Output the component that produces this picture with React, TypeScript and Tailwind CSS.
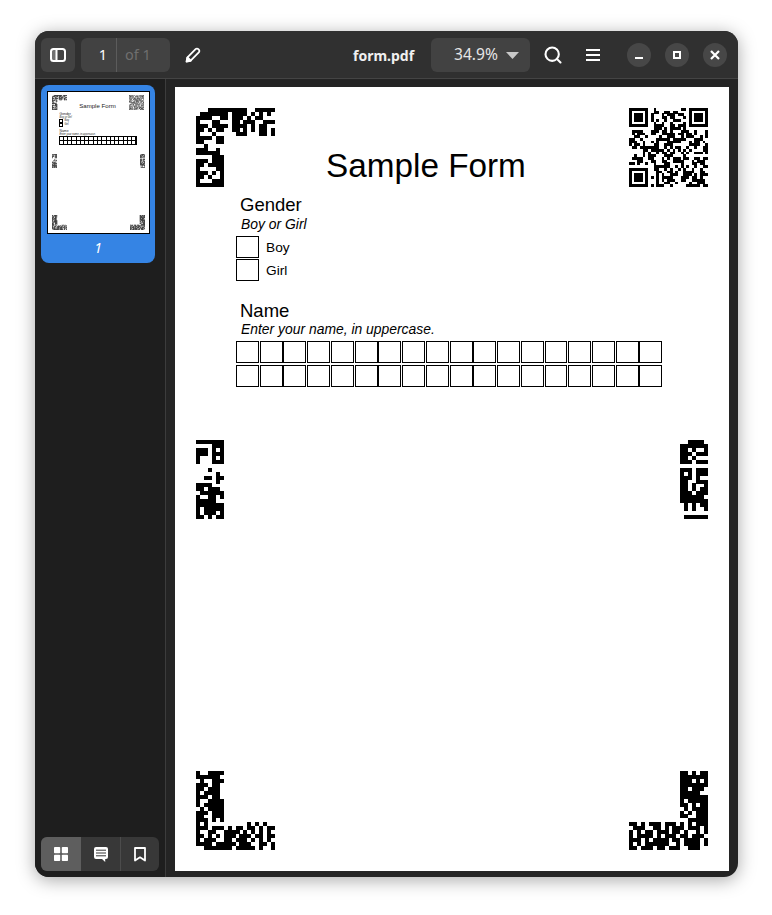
import { Search } from "lucide-react";

// module patterns for the marker blocks on the form
const topLeft = [
  "...##########..#####",
  ".#######.####.#.#.#.",
  "####..##.###.#.##...",
  "#...##...##.###..###",
  "###.####.####.#.##..",
  "##.#.##..##.#.#.##.#",
  "#...#.....###...##.#",
  "####.##",
  "##...##",
  "..#....",
  "###..#.",
  "######.",
  "....###",
  "###.###",
  "##.####",
  "#....##",
  "###.#.#",
  "##.#..#",
  "#...###",
  "#######",
];
const midLeft = [
  "#######",
  "....###",
  "###.#.#",
  "###.###",
  "#...#.#",
  "#...###",
  ".......",
  "...#...",
  ".....#.",
  "..##.##",
  ".....#.",
  "####...",
  "##.###.",
  ".######",
  "#..##.#",
  "#####..",
  "#######",
  "#.#####",
  "#.###.#",
  "##.#.##",
];
const midRight = [
  "..####.",
  "#######",
  "##.#..#",
  "###.###",
  "##.#...",
  "###.###",
  ".......",
  "###.###",
  "#.#.###",
  "###.#..",
  "##..###",
  "##.#..#",
  "##.#.##",
  "###.###",
  "######.",
  "#######",
  ".#.#.##",
  ".#.#..#",
  ".......",
  ".######",
];
const bottomLeft = [
  "#..####",
  "######.",
  ".#..###",
  "###.##.",
  "##.###.",
  "#.####.",
  "###.##.",
  "#..####",
  "#.#####",
  ".#.####",
  "###.###",
  "##..###",
  "###.#.#",
  "#.#..........#.#.#..",
  "###.###.#.##.##.#.##",
  "#..##..####.#.#.#.#.",
  "##.#.#.###.###.##.##",
  "#.###..##.###.#.#.#.",
  "####.#####.###..##.#",
  "..#######.#####.#..#",
];
const bottomRight = [
  ".............##.#.##",
  ".............#######",
  ".............###.#.#",
  ".............#######",
  ".............##.###.",
  ".............#####..",
  ".............#######",
  ".............#.#####",
  ".............##.#.##",
  "..............#.####",
  ".............#.#.###",
  ".............##..###",
  "...............#####",
  "##.#.###.###.#.#.###",
  ".###..##.#.###.###.#",
  "#.#.##.###.##.#..#.#",
  "#.####.#.###.##.###.",
  "###.#.####.##.####.#",
  "#.#.######..#.####.#",
  "##.###.##.###..###..",
];

// the top right block is a plain 29 module QR code
function buildQr() {
  const size = 29;
  const rows: string[] = [];
  let seed = 73;
  for (let y = 0; y < size; y++) {
    let row = "";
    for (let x = 0; x < size; x++) {
      seed = (seed * 137 + 59) % 1009;
      const corners = [
        [x, y],
        [size - 1 - x, y],
        [x, size - 1 - y],
      ];
      const hit = corners.find(([a, b]) => a < 8 && b < 8);
      if (hit) {
        const [a, b] = hit;
        const ring = a === 7 || b === 7;
        const outer = a === 0 || a === 6 || b === 0 || b === 6;
        const inner = a >= 2 && a <= 4 && b >= 2 && b <= 4;
        row += !ring && (outer || inner) ? "#" : ".";
      } else {
        row += seed % 100 < 48 ? "#" : ".";
      }
    }
    rows.push(row);
  }
  return rows;
}
const topRight = buildQr();

function Blocks({ rows, className, smooth }: { rows: string[]; className: string; smooth?: boolean }) {
  const cols = Math.max(...rows.map((r) => r.length));
  return (
    <svg viewBox={`0 0 ${cols} ${rows.length}`} className={className} shapeRendering={smooth ? "auto" : "crispEdges"}>
      {rows.map((row, y) =>
        row.split("").map((c, x) => (c === "#" ? <rect key={`${x}-${y}`} x={x} y={y} width={1.02} height={1.02} fill="#000" /> : null))
      )}
    </svg>
  );
}

function Thumbnail() {
  const cells = Array.from({ length: 36 });
  return (
    <div className="w-[114px] h-[178px] rounded-lg bg-[#3584e4] px-[6px] pt-[6px] flex flex-col items-center">
      <div className="w-[103px] h-[143px] border border-black bg-white flex flex-col px-[4px] pt-[3px] pb-[3px] font-['Liberation_Sans',sans-serif] text-[#222222]">
        <div className="flex h-[15px] justify-between items-start">
          <Blocks smooth rows={topLeft} className="w-[15px] h-[15px]" />
          <div className="text-[6.1px] leading-none mt-[8px] -ml-[1px]">Sample Form</div>
          <Blocks smooth rows={topRight} className="w-[15px] h-[15px]" />
        </div>
        <div className="ml-[7px] mt-[2px]">
          <div className="text-[3.4px] leading-[4px] ml-[1px]">Gender</div>
          <div className="text-[2.6px] leading-[3px] italic ml-[1px]">Boy or Girl</div>
          <div className="flex items-center gap-[2px]">
            <div className="w-[4px] h-[4px] border border-black" />
            <span className="text-[2.6px] leading-none">Boy</span>
          </div>
          <div className="flex items-center gap-[2px]">
            <div className="w-[4px] h-[4px] border border-black" />
            <span className="text-[2.6px] leading-none">Girl</span>
          </div>
          <div className="text-[3.4px] leading-[4px] mt-[2px] ml-[1px]">Name</div>
          <div className="text-[2.6px] leading-[3px] italic ml-[1px]">Enter your name, in uppercase.</div>
          <div className="w-[78px] bg-black p-px grid grid-cols-[repeat(18,1fr)] gap-px">
            {cells.map((_, i) => (
              <div key={i} className="h-[3px] bg-white" />
            ))}
          </div>
        </div>
        <div className="flex justify-between mt-[9px]">
          <Blocks smooth rows={midLeft} className="w-[5px] h-[14px]" />
          <Blocks smooth rows={midRight} className="w-[5px] h-[14px]" />
        </div>
        <div className="flex justify-between mt-auto">
          <Blocks smooth rows={bottomLeft} className="w-[15px] h-[15px]" />
          <Blocks smooth rows={bottomRight} className="w-[15px] h-[15px]" />
        </div>
      </div>
      <div className="text-white italic text-[14px] leading-none mt-[7px] font-['Noto_Sans',sans-serif]">1</div>
    </div>
  );
}

function Box({ className = "" }: { className?: string }) {
  return <div className={`border border-black ${className}`} />;
}

function FormPage() {
  const cells = Array.from({ length: 36 });
  return (
    <div className="w-[554px] h-[784px] bg-white text-black px-[21px] pt-[21px] pb-[21px] flex flex-col font-['Liberation_Sans',sans-serif]">
      <div className="flex h-[79px]">
        <Blocks rows={topLeft} className="w-[79px] h-[79px]" />
        <h1 className="text-[33.3px] leading-none mt-[41px] ml-[51px]">Sample Form</h1>
        <Blocks rows={topRight} className="w-[79px] h-[79px] ml-auto" />
      </div>

      <div className="ml-[40px] mt-[7px]">
        <div className="ml-[4px] text-[18.5px] leading-[21px]">Gender</div>
        <div className="ml-[5px] text-[13.9px] leading-[16px] italic mt-px">Boy or Girl</div>
        <div className="flex flex-col gap-px mt-[4px]">
          <div className="flex items-center">
            <Box className="w-[23px] h-[22px]" />
            <span className="ml-[7px] text-[13.7px] mt-[2px] leading-none">Boy</span>
          </div>
          <div className="flex items-center">
            <Box className="w-[23px] h-[22px]" />
            <span className="ml-[7px] text-[13.7px] mt-[2px] leading-none">Girl</span>
          </div>
        </div>

        <div className="ml-[4px] text-[18.5px] leading-[21px] mt-[19px]">Name</div>
        <div className="ml-[5px] text-[13.9px] leading-[16px] italic">Enter your name, in uppercase.</div>
        <div className="grid grid-cols-[repeat(18,22.9px)] gap-x-[0.85px] gap-y-[2px] mt-[4px]">
          {cells.map((_, i) => (
            <Box key={i} className="h-[22px]" />
          ))}
        </div>
      </div>

      <div className="flex justify-between mt-[53px]">
        <Blocks rows={midLeft} className="w-[28px] h-[79px]" />
        <Blocks rows={midRight} className="w-[28px] h-[79px]" />
      </div>

      <div className="flex justify-between mt-auto">
        <Blocks rows={bottomLeft} className="w-[79px] h-[79px]" />
        <Blocks rows={bottomRight} className="w-[79px] h-[79px]" />
      </div>
    </div>
  );
}

function WinButton({ children }: { children: React.ReactNode }) {
  return <div className="w-[24px] h-[24px] rounded-full bg-[#474747] flex items-center justify-center">{children}</div>;
}

export default function App() {
  return (
    <div className="w-[772px] h-[915px] bg-white pt-[31px] pl-[35px] overflow-hidden">
      <div className="w-[703px] h-[846px] rounded-[14px] overflow-hidden bg-[#242424] flex flex-col shadow-[0_3px_18px_rgba(0,0,0,0.35)] font-['Noto_Sans',sans-serif] text-white">
        {/* header bar */}
        <header className="h-[48px] shrink-0 bg-[#303030] border-b border-[#444444] flex items-center pl-[6px] pt-px">
          <button className="w-[34px] h-[34px] rounded-md bg-[#424242] flex items-center justify-center">
            <svg width="16" height="14" viewBox="0 0 16 14" fill="none" stroke="#fff" strokeWidth="2">
              <rect x="1" y="1" width="14" height="12" rx="2.5" />
              <path d="M6.5 1v12" />
              <rect x="1" y="1" width="5.5" height="12" rx="2" fill="#fff" fillOpacity="0.25" stroke="none" />
            </svg>
          </button>
          <div className="ml-[6px] w-[89px] h-[34px] rounded-md bg-[#424242] flex items-center text-[14.5px]">
            <div className="w-[36px] h-full border-r border-[#5c5c5c] pr-[9px] flex items-center justify-end">1</div>
            <div className="pl-[8px] text-[#6f6f6f]">of 1</div>
          </div>
          <svg className="ml-[15px]" width="16" height="16" viewBox="0 0 16 16" fill="none" stroke="#fff" strokeWidth="1.8" strokeLinejoin="round">
            <path d="M2.2 10.6 10.6 2.2a1.9 1.9 0 0 1 2.7 0l.5.5a1.9 1.9 0 0 1 0 2.7l-8.4 8.4-3.8.9z" />
            <path d="M1.6 14.4l1-4 3.2 3.2z" fill="#fff" />
          </svg>
          <div className="ml-[152px] text-[14px] font-bold w-[60px] text-center text-[#f0f0f0]">form.pdf</div>
          <div className="ml-[18px] w-[99px] h-[34px] rounded-md bg-[#424242] flex items-center pl-[23px] text-[15.6px] text-[#e6e6e6]">
            34.9%
            <svg className="ml-[8px]" width="13" height="7" viewBox="0 0 13 7">
              <path d="M0 0h13L6.5 7z" fill="#c8c8c8" />
            </svg>
          </div>
          <Search className="ml-[13px]" size={20} strokeWidth={2.5} color="#fff" />
          <svg className="ml-[22px]" width="16" height="14" viewBox="0 0 16 14" stroke="#fff" strokeWidth="1.8">
            <path d="M1 2h14M1 7h14M1 12h14" />
          </svg>
          <div className="ml-[26px] flex gap-[14px]">
            <WinButton>
              <div className="w-[8px] h-[2px] bg-white mt-[6px]" />
            </WinButton>
            <WinButton>
              <div className="w-[8px] h-[8px] border-2 border-white" />
            </WinButton>
            <WinButton>
              <svg width="10" height="10" viewBox="0 0 10 10" stroke="#fff" strokeWidth="2.2">
                <path d="M1 1l8 8M9 1l-8 8" />
              </svg>
            </WinButton>
          </div>
        </header>

        <div className="flex flex-1 min-h-0">
          {/* thumbnails */}
          <aside className="w-[131px] shrink-0 bg-[#1e1e1e] border-r border-[#3c3c3c] pl-[6px] pt-[6px] pb-[6px] flex flex-col justify-between">
            <Thumbnail />
            <div className="w-[118px] h-[34px] rounded-md overflow-hidden bg-[#383838] flex">
              <div className="w-[40px] bg-[#5e5e5e] flex items-center justify-center">
                <svg width="14" height="14" viewBox="0 0 14 14" fill="#fff">
                  <rect x="0" y="0" width="6.2" height="6.2" rx="0.8" />
                  <rect x="7.8" y="0" width="6.2" height="6.2" rx="0.8" />
                  <rect x="0" y="7.8" width="6.2" height="6.2" rx="0.8" />
                  <rect x="7.8" y="7.8" width="6.2" height="6.2" rx="0.8" />
                </svg>
              </div>
              <div className="w-[40px] border-r border-[#4c4c4c] flex items-center justify-center">
                <svg width="14" height="15" viewBox="0 0 14 15">
                  <path d="M2 0h10a2 2 0 0 1 2 2v8a2 2 0 0 1-2 2h-.8v3L8 12H2a2 2 0 0 1-2-2V2a2 2 0 0 1 2-2z" fill="#fff" />
                  <path d="M2 3.2h10M2 6h10M2 8.8h10" stroke="#383838" strokeWidth="1" />
                </svg>
              </div>
              <div className="flex-1 flex items-center justify-center">
                <svg width="12" height="15" viewBox="0 0 12 15" fill="none" stroke="#fff" strokeWidth="1.8" strokeLinejoin="round">
                  <path d="M1 1h10v12.5l-5-3.2-5 3.2z" />
                </svg>
              </div>
            </div>
          </aside>

          {/* document */}
          <main className="flex-1 pl-[9px] pt-[8px]">
            <FormPage />
          </main>
        </div>
      </div>
    </div>
  );
}
